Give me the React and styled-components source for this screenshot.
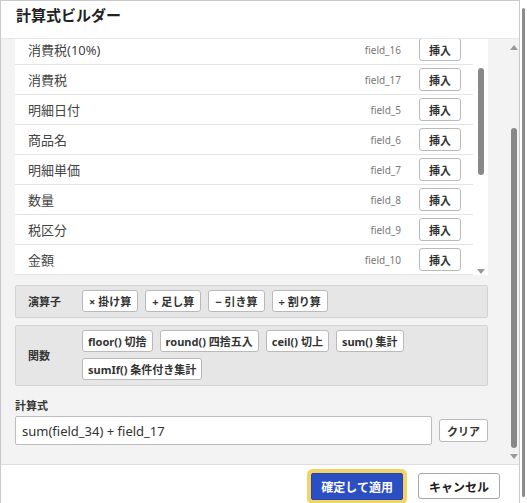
import { useEffect, useRef } from 'react';
import styled, { createGlobalStyle } from 'styled-components';

const GlobalStyle = createGlobalStyle`
  html, body {
    margin: 0;
    padding: 0;
    overflow: hidden;
    background: #ffffff;
  }
  body {
    font-family: "Noto Sans", "Noto Sans CJK JP", sans-serif;
    color: #333;
  }
  * { box-sizing: border-box; }
`;

const Page = styled.div`
  display: flex;
  width: 527px;
  height: 503px;
`;

const Dialog = styled.div`
  width: 520px;
  height: 503px;
  display: flex;
  flex-direction: column;
  border: 1px solid #c9c9c9;
  border-bottom: none;
  background: #fff;
  overflow: hidden;
`;

const PageBar = styled.div`
  flex: 1;
  display: flex;
  justify-content: center;
  padding: 8px 0 6px;
  background: #fff;
`;

const PageThumb = styled.div`
  width: 3px;
  border-radius: 2px;
  background: #8c8c8c;
`;

const Header = styled.div`
  height: 38px;
  flex: none;
  display: flex;
  align-items: center;
  padding: 0 15px 10px;
  border-bottom: 1px solid #e6e6e6;
`;

const Title = styled.h1`
  margin: 0;
  font-family: "Noto Sans CJK JP", sans-serif;
  font-size: 15px;
  font-weight: 700;
  color: #222;
`;

const Body = styled.div`
  height: 426px;
  flex: none;
  display: flex;
  background: #f3f3f3;
  border-bottom: 1px solid #dedede;
`;

const Content = styled.div`
  flex: 1;
  display: flex;
  flex-direction: column;
  padding: 0 20px 0 14px;
  overflow: hidden;
`;

const Track = styled.div`
  width: ${p => p.$w}px;
  flex: none;
  display: flex;
  flex-direction: column;
  align-items: center;
`;

const Arrow = styled.div`
  flex: none;
  width: 0;
  height: 0;
  border-left: 4px solid transparent;
  border-right: 4px solid transparent;
  ${p => p.$down
    ? 'border-top: 5px solid #9a9a9a;'
    : 'border-bottom: 5px solid #9a9a9a;'}
  margin-top: ${p => p.$gap || 0}px;
`;

const Thumb = styled.div`
  flex: none;
  width: 6px;
  height: ${p => p.$h}px;
  margin-top: ${p => p.$gap}px;
  border-radius: 3px;
  background: #888;
`;

const ListBox = styled.div`
  height: 236px;
  flex: none;
  display: flex;
  background: #fff;
`;

const Rows = styled.div`
  flex: 1;
  overflow: hidden;
`;

const Row = styled.div`
  height: 30px;
  display: flex;
  align-items: center;
  padding: 0 12px 0 13px;
  border-bottom: 1px solid #e4e4e4;
`;

const RowName = styled.span`
  flex: 1;
  font-family: "Noto Sans", "Noto Sans CJK JP", sans-serif;
  font-size: 13px;
  color: #444;
`;

const FieldKey = styled.span`
  font-family: "Noto Sans", sans-serif;
  font-size: 10px;
  color: #777;
  margin-right: 18px;
`;

const Btn = styled.button`
  height: ${p => p.$h || 22}px;
  padding: 0 ${p => p.$px || 6}px;
  background: #fff;
  border: 1px solid #b9b9b9;
  border-radius: 3px;
  font-family: "Noto Sans", "Noto Sans CJK JP", sans-serif;
  font-size: 11px;
  font-weight: 700;
  color: #333;
  white-space: nowrap;
  cursor: pointer;
`;

const Section = styled.div`
  margin-top: ${p => p.$mt}px;
  flex: none;
  display: flex;
  align-items: center;
  padding: 4px 10px 5px 0;
  background: #e6e6e6;
  border: 1px solid #d3d3d3;
  border-radius: 2px;
`;

const SectionLabel = styled.div`
  width: 66px;
  padding-left: 12px;
  font-family: "Noto Sans CJK JP", sans-serif;
  font-size: 11px;
  font-weight: 700;
  color: #333;
`;

const BtnWrap = styled.div`
  flex: 1;
  display: flex;
  flex-wrap: wrap;
  gap: 6px 7px;
`;

const FormulaLabel = styled.div`
  margin-top: 11px;
  font-family: "Noto Sans CJK JP", sans-serif;
  font-size: 11px;
  font-weight: 700;
  color: #333;
`;

const FormulaRow = styled.div`
  margin-top: 3px;
  display: flex;
  align-items: center;
  gap: 7px;
`;

const FormulaInput = styled.input`
  flex: 1;
  height: 29px;
  padding: 0 6px;
  border: 1px solid #bdbdbd;
  border-radius: 2px;
  background: #fff;
  font-family: "Noto Sans", sans-serif;
  font-size: 13px;
  color: #333;
  outline: none;
`;

const Footer = styled.div`
  flex: 1;
  display: flex;
  justify-content: flex-end;
  align-items: flex-start;
  gap: 15px;
  padding: 8px 19px 0 0;
  background: #fff;
`;

const PrimaryBtn = styled.button`
  height: 27px;
  padding: 0 9px;
  background: #2b4ec2;
  border: 1px solid #2445b3;
  border-radius: 2px;
  box-shadow: 0 0 0 4px #f2d464;
  font-family: "Noto Sans CJK JP", sans-serif;
  font-size: 12px;
  font-weight: 700;
  color: #fff;
`;

const CancelBtn = styled.button`
  height: 26px;
  padding: 0 10px;
  background: #fff;
  border: 1px solid #a8a8a8;
  border-radius: 3px;
  font-family: "Noto Sans CJK JP", sans-serif;
  font-size: 12px;
  font-weight: 700;
  color: #222;
`;

const fields = [
  ['消費税(10%)', 'field_16'],
  ['消費税', 'field_17'],
  ['明細日付', 'field_5'],
  ['商品名', 'field_6'],
  ['明細単価', 'field_7'],
  ['数量', 'field_8'],
  ['税区分', 'field_9'],
  ['金額', 'field_10'],
];

const operators = ['× 掛け算', '+ 足し算', '− 引き算', '÷ 割り算'];
const functions = ['floor() 切捨', 'round() 四捨五入', 'ceil() 切上', 'sum() 集計', 'sumIf() 条件付き集計'];

export default function App() {
  const rowsRef = useRef(null);

  // リストは少しスクロールした状態
  useEffect(() => {
    if (rowsRef.current) rowsRef.current.scrollTop = 4;
  }, []);

  return (
    <>
      <GlobalStyle />
      <Page>
        <Dialog>
          <Header>
            <Title>計算式ビルダー</Title>
          </Header>
          <Body>
            <Content>
              <ListBox>
                <Rows ref={rowsRef}>
                  {fields.map(([name, key]) => (
                    <Row key={key}>
                      <RowName>{name}</RowName>
                      <FieldKey>{key}</FieldKey>
                      <Btn $h={23} $px={9}>挿入</Btn>
                    </Row>
                  ))}
                </Rows>
                <Track $w={15}>
                  <Thumb $gap={29} $h={107} />
                  <Arrow $down $gap={94} />
                </Track>
              </ListBox>

              <Section $mt={10}>
                <SectionLabel>演算子</SectionLabel>
                <BtnWrap>
                  {operators.map(op => <Btn key={op}>{op}</Btn>)}
                </BtnWrap>
              </Section>

              <Section $mt={7}>
                <SectionLabel>関数</SectionLabel>
                <BtnWrap>
                  {functions.map(fn => <Btn key={fn} $px={5}>{fn}</Btn>)}
                </BtnWrap>
              </Section>

              <FormulaLabel>計算式</FormulaLabel>
              <FormulaRow>
                <FormulaInput defaultValue="sum(field_34) + field_17" />
                <Btn $h={23} $px={7}>クリア</Btn>
              </FormulaRow>
            </Content>
            <Track $w={11}>
              <Arrow $gap={6} />
              <Thumb $gap={78} $h={320} />
              <Arrow $down $gap={6} />
            </Track>
          </Body>
          <Footer>
            <PrimaryBtn>確定して適用</PrimaryBtn>
            <CancelBtn>キャンセル</CancelBtn>
          </Footer>
        </Dialog>
        <PageBar>
          <PageThumb />
        </PageBar>
      </Page>
    </>
  );
}
